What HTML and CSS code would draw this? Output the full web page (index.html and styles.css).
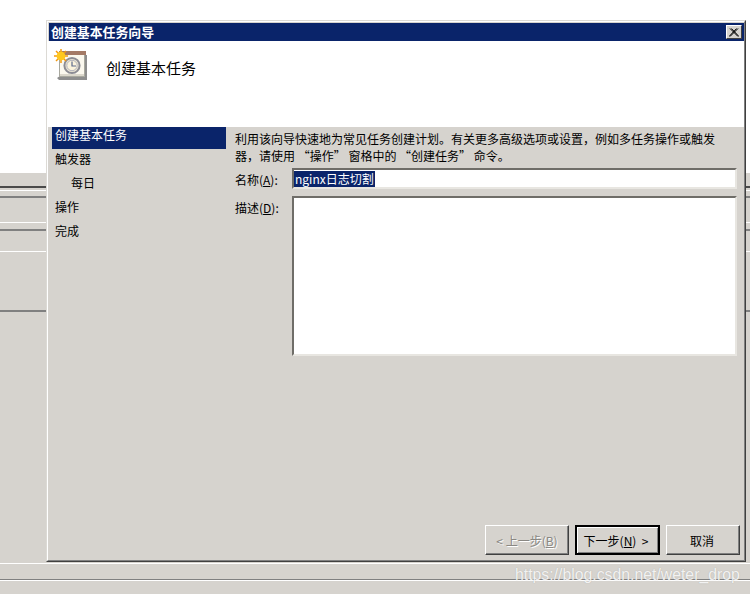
FILE: index.html
```html
<!DOCTYPE html>
<html lang="zh-CN">
<head>
<meta charset="utf-8">
<title>创建基本任务向导</title>
<link rel="stylesheet" href="styles.css">
</head>
<body>
<div class="desktop">
  <div class="band band-white"></div>
  <div class="band band-a"></div>
  <div class="band band-b"></div>
  <div class="band band-c"></div>
  <div class="band band-d"></div>
  <div class="band band-e"></div>
  <div class="band band-f"></div>
  <div class="band band-g"></div>
  <div class="band band-h"></div>
</div>

<section class="dialog">
  <div class="dialog-inner">
    <header class="titlebar">
      <span class="title">创建基本任务向导</span>
      <span class="close">
        <svg width="10" height="9" viewBox="0 0 10 9"><path d="M1 0.5 L9 8.5 M2.4 0.5 L10 8.5 M9 0.5 L1 8.5 M7.6 0.5 L0 8.5" stroke="#000" stroke-width="1" fill="none"/></svg>
      </span>
    </header>
    <div class="head">
      <svg class="head-icon" width="34" height="32" viewBox="0 0 34 32">
        <path d="M3 28 L6 26 H32 V30 H5 Z" fill="#8e8e8e"/>
        <rect x="5.5" y="3.5" width="25" height="23" fill="#fbf8ee" stroke="#a8a89e"/>
        <rect x="5" y="1" width="27" height="4" fill="#a47a66"/>
        <rect x="31" y="5" width="2" height="25" fill="#8d8d8d"/>
        <rect x="6" y="24" width="24" height="2" fill="#dcd8cc"/>
        <circle cx="18" cy="15.5" r="7.6" fill="#e9e4d4" stroke="#8c8c94" stroke-width="2"/>
        <circle cx="18" cy="15.5" r="5.2" fill="#fbf3dc" stroke="#b5b5bd"/>
        <path d="M18 11.5 V16 H22" stroke="#5c6a8c" stroke-width="1.2" fill="none"/>
        <g stroke="#f39a10" stroke-width="1.5">
          <path d="M7 -1 V13 M0 6 H14 M2 1 L12 11 M12 1 L2 11"/>
        </g>
        <circle cx="7" cy="6" r="4.4" fill="#ffc81e"/>
      </svg>
      <h1 class="head-title">创建基本任务</h1>
    </div>
    <div class="body">
      <nav class="steps">
        <div class="step step-active">创建基本任务</div>
        <div class="step">触发器</div>
        <div class="step step-sub">每日</div>
        <div class="step">操作</div>
        <div class="step">完成</div>
      </nav>
      <main class="main">
        <p class="intro">利用该向导快速地为常见任务创建计划。有关更多高级选项或设置，例如多任务操作或触发器，请使用 “操作” 窗格中的 “创建任务” 命令。</p>
        <div class="form">
          <label class="label label-name">名称(<u>A</u>):</label>
          <div class="field field-name"><span class="selected">nginx日志切割</span></div>
          <label class="label">描述(<u>D</u>):</label>
          <textarea class="field field-desc"></textarea>
        </div>
        <div class="buttons">
          <button class="btn btn-prev" disabled>&lt; 上一步(<u>B</u>)</button>
          <button class="btn btn-next">下一步(<u>N</u>)&nbsp; &gt;</button>
          <button class="btn btn-cancel">取消</button>
        </div>
      </main>
    </div>
  </div>
</section>

<div class="watermark">https://blog.csdn.net/weter_drop</div>
</body>
</html>
```
FILE: styles.css
```css
* { box-sizing: border-box; }
html, body { margin: 0; padding: 0; }
body {
  width: 750px;
  height: 594px;
  overflow: hidden;
  position: relative;
  background: #d6d3ce;
  font-family: "Noto Sans CJK SC", "Liberation Sans", sans-serif;
  font-size: 12px;
  color: #000;
}

.desktop { display: flex; flex-direction: column; width: 750px; height: 594px; }
.band-white { height: 172px; background: #fff; }
.band-a { height: 16px; border-top: 1px solid #fff; border-bottom: 2px solid #4a4a4a; }
.band-b { height: 3px; border-bottom: 1px solid #fff; }
.band-c { height: 7px; border-bottom: 2px solid #808080; }
.band-d { height: 25px; border-bottom: 1px solid #fff; }
.band-e { height: 8px; border-bottom: 2px solid #808080; }
.band-f { height: 21px; border-bottom: 1px solid #fff; }
.band-g { height: 60px; border-bottom: 2px solid #808080; }
.band-h { height: 282px; background:
  linear-gradient(#fff, #fff) 0 251px / 100% 1px no-repeat,
  linear-gradient(#808080, #808080) 0 267px / 100% 1px no-repeat,
  linear-gradient(#fff, #fff) 0 268px / 100% 1px no-repeat; }

.dialog {
  position: absolute;
  left: 46px;
  top: 20px;
  width: 700px;
  height: 542px;
  border: 1px solid;
  border-color: #dcdad5 #404040 #404040 #dcdad5;
}
.dialog-inner {
  display: flex;
  flex-direction: column;
  height: 100%;
  padding-top: 1px;
  background: #d6d3ce;
  border: 1px solid;
  border-color: #fff #808080 #808080 #fff;
}

.titlebar {
  flex: none;
  height: 18px;
  margin: 0 0 0 1px;
  background: #0a246a;
  display: flex;
  align-items: center;
  justify-content: space-between;
  padding: 0 2px 0 2px;
}
.title { color: #fff; font-weight: 700; font-size: 12.9px; line-height: 18px; white-space: nowrap; }
.close {
  width: 16px;
  height: 14px;
  background: #d6d3ce;
  display: flex;
  align-items: center;
  justify-content: center;
  border: 1px solid;
  border-color: #fff #404040 #404040 #fff;
}

.head {
  flex: none;
  height: 86px;
  background: #fff;
  display: flex;
  align-items: flex-start;
  padding: 8px 0 0 6px;
}
.head-icon { flex: none; display: block; margin-top: 1px; overflow: visible; }
.head-title { margin: 8px 0 0 18px; font-size: 15px; font-weight: 400; line-height: 22px; white-space: nowrap; }

.body { flex: 1; display: flex; min-height: 0; }

.steps { flex: none; width: 178px; padding-left: 4px; display: flex; flex-direction: column; gap: 2px; }
.step { height: 22px; line-height: 16px; padding-left: 3px; white-space: nowrap; }
.step-active { background: #0a246a; color: #fff; }
.step-sub { padding-left: 19px; }

.main { flex: 1; display: flex; flex-direction: column; padding: 3px 0 5px 9px; min-width: 0; }
.intro { margin: 0 7px 0 0; line-height: 17px; height: 34px; width: 490px; }

.form {
  display: grid;
  grid-template-columns: 57px 445px;
  grid-template-rows: 21px 160px;
  row-gap: 7px;
  margin-top: 4px;
}
.label { line-height: 24px; white-space: nowrap; }
.field {
  display: block;
  background: #fff;
  border: 2px solid;
  border-color: #6f6d68 #e8e6e1 #e8e6e1 #6f6d68;
  margin: 0;
  padding: 0;
  resize: none;
  outline: 0;
  overflow: hidden;
}
.field-name { line-height: 17px; font-size: 12px; white-space: nowrap; }
.selected { display: inline-block; background: #0a246a; color: #fff; height: 17px; padding: 0 1px; line-height: 16px; }

.buttons { margin-top: auto; display: flex; justify-content: flex-end; gap: 6px; padding-right: 4px; }
.btn {
  height: 30px;
  font: inherit;
  font-size: 12px;
  background: #d6d3ce;
  color: #000;
  padding: 0;
  border: 1px solid;
  border-color: #fff #404040 #404040 #fff;
  box-shadow: inset -1px -1px 0 #808080;
  white-space: nowrap;
}
.btn-prev { width: 84px; color: #8a8883; text-shadow: 1px 1px 0 #fff; }
.btn-next { width: 85px; border: 2px solid #000; padding-right: 3px; box-shadow: inset 1px 1px 0 #fff, inset -1px -1px 0 #808080; }
.btn-cancel { width: 74px; padding-right: 2px; }

.watermark {
  position: absolute;
  left: 515px;
  top: 564px;
  font-family: "Liberation Sans", sans-serif;
  font-size: 15.8px;
  line-height: 22px;
  color: rgba(255, 255, 255, 0.85);
  text-shadow: 0 0 1px rgba(130, 130, 130, 0.5);
  white-space: nowrap;
}
```
